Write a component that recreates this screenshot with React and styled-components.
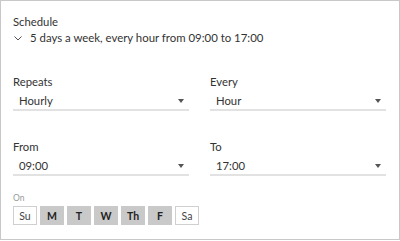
import styled, { createGlobalStyle } from "styled-components";

const GlobalStyle = createGlobalStyle`
  body {
    margin: 0;
    background: #fff;
    font-family: Lato, "Noto Sans", sans-serif;
    color: #333;
  }
`;

const Frame = styled.div`
  width: 400px;
  height: 240px;
  box-sizing: border-box;
  border: 1px solid #c8c8c8;
  padding: 14px 12px 0 12px;
`;

const Label = styled.div`
  font-size: 11.3px;
  line-height: 14px;
  color: #333;
`;

const Summary = styled.div`
  display: flex;
  align-items: center;
  gap: 8px;
  margin-top: 2px;
  font-size: 11.4px;
  line-height: 14px;
  padding-left: 1px;
`;

const Grid = styled.div`
  display: grid;
  grid-template-columns: 176px 176px;
  column-gap: 21px;
  row-gap: 29px;
  margin-top: 30px;
`;

const Field = styled.div`
  display: flex;
  flex-direction: column;
  gap: 3px;
`;

const Select = styled.div`
  display: flex;
  align-items: center;
  justify-content: space-between;
  height: 17px;
  padding: 0 5px 0 6px;
  border-bottom: 2px solid #e2e2e2;
  font-size: 11.3px;
`;

const Arrow = styled.span`
  width: 0;
  height: 0;
  border-left: 3.5px solid transparent;
  border-right: 3.5px solid transparent;
  border-top: 4px solid #555;
`;

const OnLabel = styled.div`
  margin-top: 17px;
  font-size: 8.5px;
  line-height: 10px;
  color: #999;
`;

const Days = styled.div`
  display: flex;
  gap: 3px;
  margin-top: 3px;
`;

const Day = styled.div`
  width: 24px;
  height: 19px;
  box-sizing: border-box;
  display: flex;
  align-items: center;
  justify-content: center;
  font-size: 10.5px;
  border: 1px solid ${(p) => (p.$on ? "#c9c9c9" : "#cfcfcf")};
  background: ${(p) => (p.$on ? "#c9c9c9" : "#fff")};
  color: ${(p) => (p.$on ? "#222" : "#444")};
  font-weight: ${(p) => (p.$on ? 700 : 400)};
`;

const Chevron = () => (
  <svg width="8" height="5" viewBox="0 0 8 5">
    <path d="M0.5 0.5 L4 4 L7.5 0.5" fill="none" stroke="#555" strokeWidth="1" />
  </svg>
);

const fields = [
  ["Repeats", "Hourly"],
  ["Every", "Hour"],
  ["From", "09:00"],
  ["To", "17:00"],
];

const days = [
  ["Su", false],
  ["M", true],
  ["T", true],
  ["W", true],
  ["Th", true],
  ["F", true],
  ["Sa", false],
];

export default function App() {
  return (
    <>
      <GlobalStyle />
      <Frame>
        <Label>Schedule</Label>
        <Summary>
          <Chevron />
          5 days a week, every hour from 09:00 to 17:00
        </Summary>
        <Grid>
          {fields.map(([label, value]) => (
            <Field key={label}>
              <Label>{label}</Label>
              <Select>
                {value}
                <Arrow />
              </Select>
            </Field>
          ))}
        </Grid>
        <OnLabel>On</OnLabel>
        <Days>
          {days.map(([d, on]) => (
            <Day key={d} $on={on}>
              {d}
            </Day>
          ))}
        </Days>
      </Frame>
    </>
  );
}
